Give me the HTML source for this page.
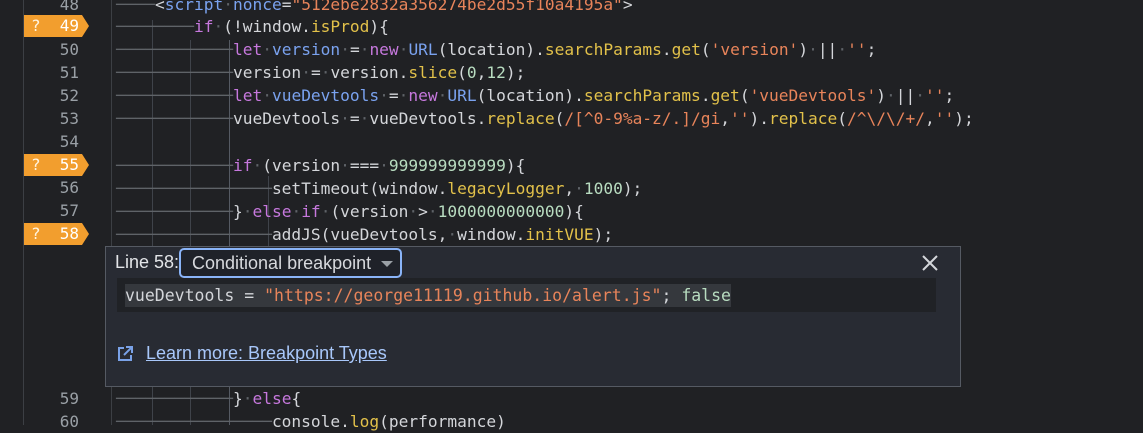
<!DOCTYPE html>
<html><head><meta charset="utf-8"><style>
html,body{margin:0;padding:0;}
body{width:1143px;height:425px;background:#202124;overflow:hidden;position:relative;font-family:"DejaVu Sans Mono","Liberation Mono",monospace;}
.gut{position:absolute;left:23px;top:0;width:87px;height:425px;border-left:1px solid #3c3f44;border-right:1px solid #3c3f44;background:#202124;}
.ln{position:absolute;left:24px;width:55px;text-align:right;font-size:16px;color:#9aa0a6;height:22px;line-height:22px;}
.bp{position:absolute;left:24px;width:58px;height:22px;background:#f29e2e;}
.bp:after{content:"";position:absolute;right:-7px;top:0;border-left:7px solid #f29e2e;border-top:11px solid transparent;border-bottom:11px solid transparent;}
.bp span{position:absolute;left:7px;top:0;line-height:22px;font-size:16px;color:#fff4e0;}
.bp b{position:absolute;right:3px;top:0;line-height:22px;font-size:16px;color:#fff;font-weight:normal;}
.code{position:absolute;left:116px;font-size:16.2px;white-space:pre;color:#d4d6da;height:23px;line-height:23px;}
.w{color:#5f6368}
.k{color:#c678dd}
.v{color:#7aa2ef}
.m{color:#e2c14a}
.s{color:#e8845a}
.n{color:#b8dcc0}
.vg{position:absolute;width:1px;background:#3f434a;}
.panel{position:absolute;left:105px;top:246px;width:854px;height:139px;background:#282b33;border:1px solid #555a63;}
.sans{font-family:"Liberation Sans",Arial,sans-serif;}
</style></head><body>
<div class="gut"></div>
<div class="vg" style="left:152px;top:20px;height:405px"></div>
<div class="vg" style="left:190px;top:40px;height:385px"></div>
<div class="vg" style="left:229px;top:40px;height:385px;background:#555a63"></div>
<div class="vg" style="left:268px;top:176px;height:70px"></div>

<div class="ln" style="top:-6px">48</div>
<div class="bp" style="top:15px"><span>?</span><b>49</b></div>
<div class="ln" style="top:39px">50</div>
<div class="ln" style="top:62px">51</div>
<div class="ln" style="top:85px">52</div>
<div class="ln" style="top:108px">53</div>
<div class="ln" style="top:131px">54</div>
<div class="bp" style="top:154px"><span>?</span><b>55</b></div>
<div class="ln" style="top:177px">56</div>
<div class="ln" style="top:200px">57</div>
<div class="bp" style="top:223px"><span>?</span><b>58</b></div>
<div class="ln" style="top:388px">59</div>
<div class="ln" style="top:411px">60</div>

<div class="code" style="top:-7px"><span class="w">────</span>&lt;<span class="v">script</span><span class="w">·</span><span class="v">nonce</span>=<span class="s">"512ebe2832a356274be2d55f10a4195a"</span>&gt;</div>
<div class="code" style="top:15px"><span class="w">────────</span><span class="k">if</span><span class="w">·</span>(!window.<span class="m">isProd</span>){</div>
<div class="code" style="top:38px"><span class="w">────────────</span><span class="k">let</span><span class="w">·</span><span class="v">version</span><span class="w">·</span>=<span class="w">·</span><span class="k">new</span><span class="w">·</span><span class="v">URL</span>(location).<span class="m">searchParams</span>.<span class="m">get</span>(<span class="s">'version'</span>)<span class="w">·</span>||<span class="w">·</span><span class="s">''</span>;</div>
<div class="code" style="top:61px"><span class="w">────────────</span>version<span class="w">·</span>=<span class="w">·</span>version.<span class="m">slice</span>(<span class="n">0</span>,<span class="n">12</span>);</div>
<div class="code" style="top:84px"><span class="w">────────────</span><span class="k">let</span><span class="w">·</span><span class="v">vueDevtools</span><span class="w">·</span>=<span class="w">·</span><span class="k">new</span><span class="w">·</span><span class="v">URL</span>(location).<span class="m">searchParams</span>.<span class="m">get</span>(<span class="s">'vueDevtools'</span>)<span class="w">·</span>||<span class="w">·</span><span class="s">''</span>;</div>
<div class="code" style="top:107px"><span class="w">────────────</span>vueDevtools<span class="w">·</span>=<span class="w">·</span>vueDevtools.<span class="m">replace</span>(<span class="s">/[^0-9%a-z/.]/gi</span>,<span class="s">''</span>).<span class="m">replace</span>(<span class="s">/^\/\/+/</span>,<span class="s">''</span>);</div>
<div class="code" style="top:154px"><span class="w">────────────</span><span class="k">if</span><span class="w">·</span>(version<span class="w">·</span>===<span class="w">·</span><span class="n">999999999999</span>){</div>
<div class="code" style="top:177px"><span class="w">────────────────</span>setTimeout(window.<span class="m">legacyLogger</span>,<span class="w">·</span><span class="n">1000</span>);</div>
<div class="code" style="top:200px"><span class="w">────────────</span>}<span class="w">·</span><span class="k">else</span><span class="w">·</span><span class="k">if</span><span class="w">·</span>(version<span class="w">·</span>&gt;<span class="w">·</span><span class="n">1000000000000</span>){</div>
<div class="code" style="top:223px"><span class="w">────────────────</span>addJS(vueDevtools,<span class="w">·</span>window.<span class="m">initVUE</span>);</div>
<div class="code" style="top:387px"><span class="w">────────────</span>}<span class="w">·</span><span class="k">else</span>{</div>
<div class="code" style="top:410px"><span class="w">────────────────</span>console.<span class="m">log</span>(performance)</div>

<div class="panel">
  <div class="sans" style="position:absolute;left:9px;top:4px;font-size:18px;line-height:22px;color:#e3e5e8">Line 58:</div>
  <div class="sans" style="position:absolute;left:73px;top:1px;width:219px;height:26px;border:2px solid #8ab4f8;border-radius:5px;background:#1f2229;font-size:18px;line-height:26px;color:#d7d9dd;text-indent:11px">Conditional breakpoint<span style="position:absolute;left:200px;top:11px;border-left:6px solid transparent;border-right:6px solid transparent;border-top:6px solid #9aa0a6"></span></div>
  <svg style="position:absolute;left:815px;top:7px" width="18" height="18" viewBox="0 0 18 18"><path d="M2 2L16 16M16 2L2 16" stroke="#d4d6da" stroke-width="2"/></svg>
  <div style="position:absolute;left:11px;top:31px;width:819px;height:34px;background:#202226"></div>
  <div style="position:absolute;left:19px;top:37px;height:23px;line-height:23px;font-size:16.5px;white-space:pre;color:#d4d6da;background:#35383d">vueDevtools = <span class="s">"https://george11119.github.io/alert.js"</span>; <span class="n">false</span></div>
  <svg style="position:absolute;left:10px;top:98px" width="18" height="18" viewBox="0 0 18 18"><path d="M8 3H3v12h12v-5" fill="none" stroke="#7aa2e8" stroke-width="2"/><path d="M10 2h6v6M16 2L8 10" fill="none" stroke="#7aa2e8" stroke-width="2"/></svg>
  <div class="sans" style="position:absolute;left:40px;top:95px;font-size:18px;line-height:22px;color:#a8c7fa;text-decoration:underline">Learn more: Breakpoint Types</div>
</div>
</body></html>
